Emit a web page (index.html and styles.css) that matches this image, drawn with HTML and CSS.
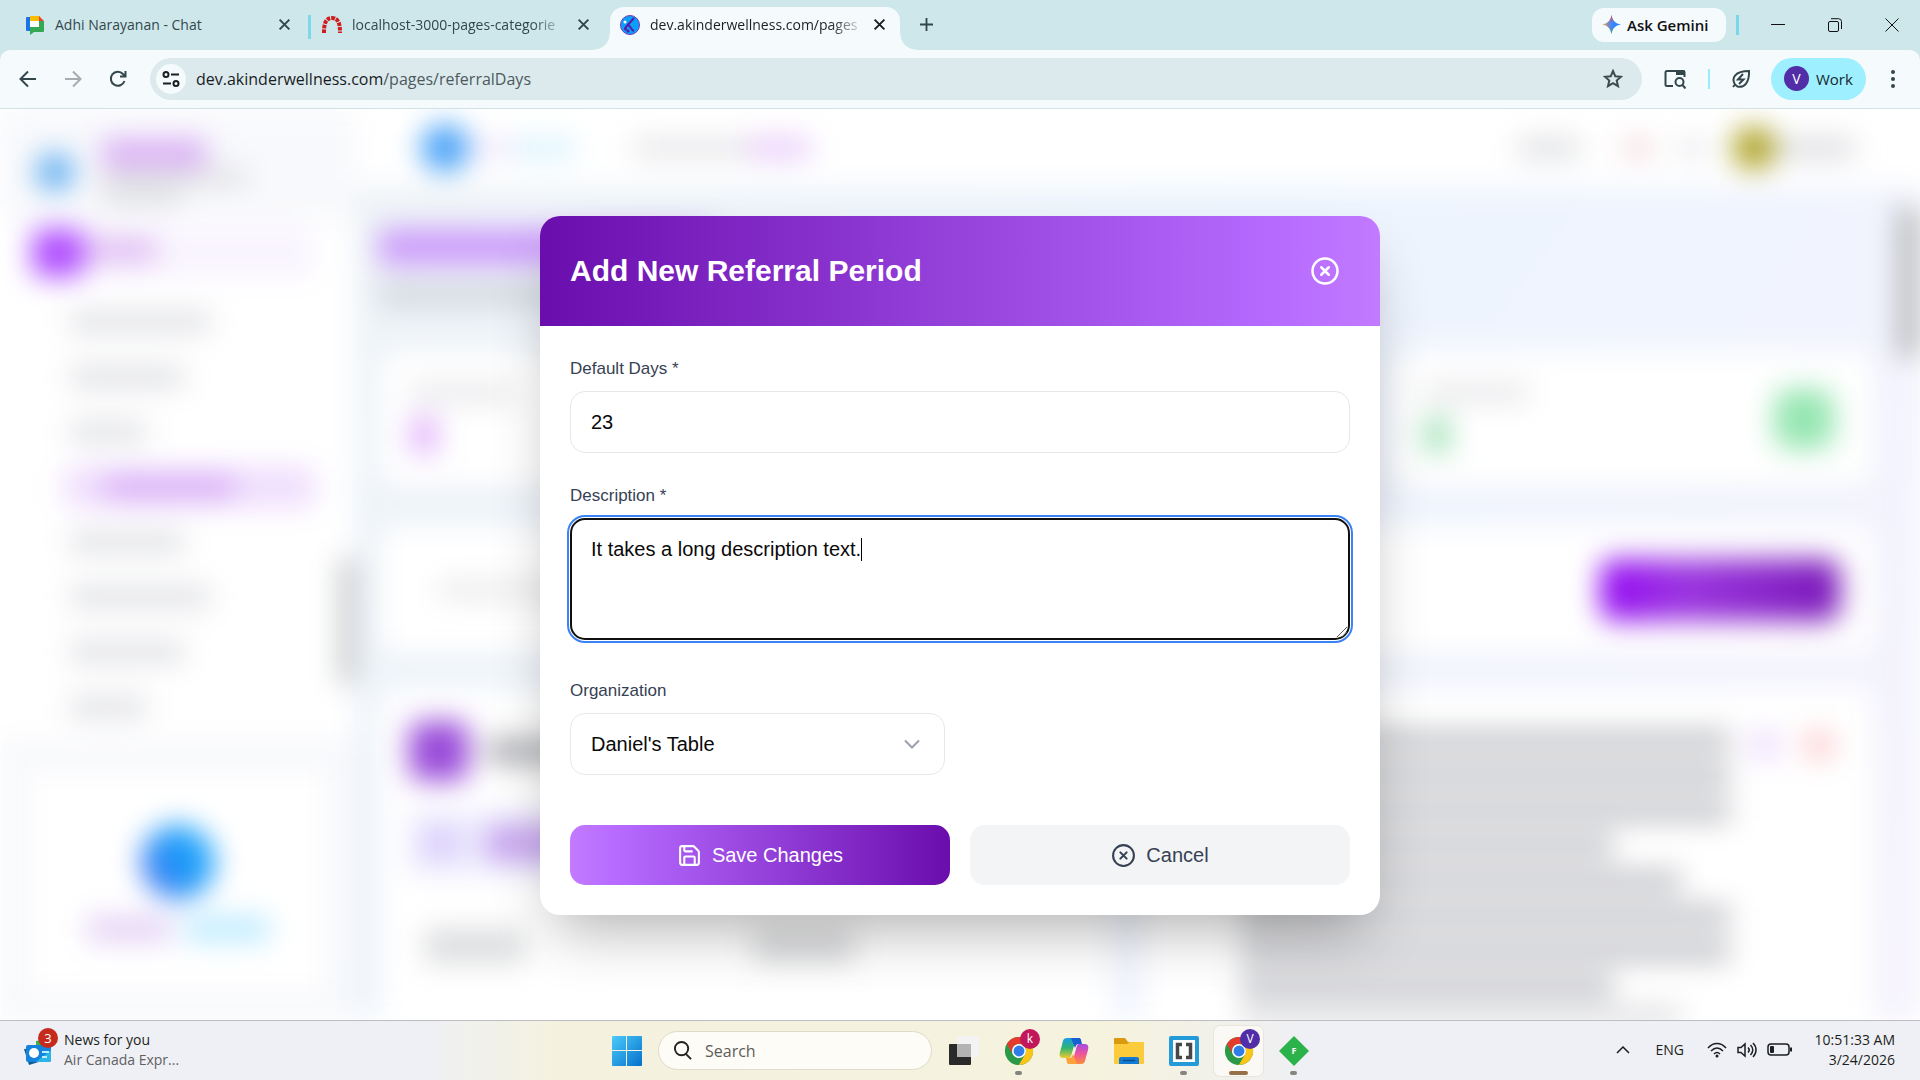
FILE: index.html
```html
<!DOCTYPE html>
<html lang="en">

<head>
  <meta charset="UTF-8">
  <title>dev.akinderwellness.com/pages/referralDays</title>
  <link rel="stylesheet" href="styles.css">
</head>

<body>
  <!-- shared symbols -->
  <svg class="defs" aria-hidden="true">
    <symbol id="x" viewBox="0 0 12 12">
      <path d="M1.5 1.5l9 9M10.500 1.500l-9 9" stroke="currentColor" stroke-width="1.8" />
    </symbol>
    <symbol id="circle-x" viewBox="0 0 24 24">
      <g fill="none" stroke="currentColor" stroke-width="2" stroke-linecap="round">
        <circle cx="12" cy="12" r="10" />
        <path d="M15 9l-6 6M9 9l6 6" />
      </g>
    </symbol>
    <symbol id="chrome" viewBox="0 0 32 32">
      <circle cx="16" cy="16" r="15" fill="#2a9a48" />
      <path d="M3 8.500A15 15 0 0 1 29 8.500H16a7.500 7.500 0 0 0-6.500 11.200z" fill="#e33b2e" />
      <path d="M29 8.500A15 15 0 0 1 15.800 31l6.700-11.300A7.500 7.500 0 0 0 16 8.500z" fill="#fcc419" />
      <circle cx="16" cy="16" r="7.500" fill="#fff" />
      <circle cx="16" cy="16" r="5.800" fill="#2f7de9" />
    </symbol>
  </svg>

  <header class="tabstrip">
    <div class="tab">
      <svg class="favicon" viewBox="0 0 20 20">
        <path d="M2 2h4v14H2a1 1 0 0 1-1-1V3a1 1 0 0 1 1-1z" fill="#1a73e8" />
        <path d="M5 1h10v5H5z" fill="#fbbc04" />
        <path d="M14 1l5 5h-5z" fill="#ea4335" />
        <path d="M14 6h5v10a1 1 0 0 1-1 1H9l-4 3v-8h9z" fill="#34a853" />
        <path d="M5 6h9v6H5z" fill="#fff" />
      </svg>
      <span class="tabTitle">Adhi Narayanan - Chat</span>
      <button class="tabClose" aria-label="Close tab"><svg><use href="#x" /></svg></button>
    </div>
    <div class="tab divided">
      <svg class="favicon" viewBox="0 0 20 20">
        <path d="M2 18C2 10 3 3 10 3s8 7 8 15" fill="none" stroke="#d01c1c" stroke-width="4" stroke-dasharray="3.600 1" />
      </svg>
      <span class="tabTitle fade">localhost-3000-pages-categorie</span>
      <button class="tabClose" aria-label="Close tab"><svg><use href="#x" /></svg></button>
    </div>
    <div class="tab active">
      <svg class="favicon" viewBox="0 0 20 20">
        <circle cx="10" cy="10" r="9.500" fill="#08a0f8" stroke="#7a35b8" />
        <path d="M14 3L6 12c-2 2-1 3 1 2M8 10c2 0 3 5 6 6" fill="none" stroke="#5b19a6" stroke-width="2" />
        <circle cx="5" cy="7" r="1.500" fill="#fff" />
        <circle cx="8" cy="16" r="1.500" fill="#5b19a6" />
      </svg>
      <span class="tabTitle fade">dev.akinderwellness.com/pages</span>
      <button class="tabClose" aria-label="Close tab"><svg><use href="#x" /></svg></button>
    </div>
    <button class="newTab" aria-label="New tab">
      <svg viewBox="0 0 14 14"><path d="M7 0v14M0 7h14" stroke="currentColor" stroke-width="2" /></svg>
    </button>
    <div class="windowTools">
      <button class="gemini">
        <svg viewBox="0 0 20 20">
          <defs>
            <linearGradient id="gem" x1="0" y1="0" x2="1" y2="0">
              <stop offset="0" stop-color="#f4b534" />
              <stop offset=".35" stop-color="#7a86c9" />
              <stop offset=".6" stop-color="#3186ff" />
              <stop offset="1" stop-color="#3186ff" />
            </linearGradient>
            <linearGradient id="gem2" x1="0" y1="0" x2="0" y2="1">
              <stop offset="0" stop-color="#f04438" />
              <stop offset=".4" stop-color="#f04438" stop-opacity="0" />
              <stop offset=".65" stop-color="#2aa55a" stop-opacity="0" />
              <stop offset="1" stop-color="#2aa55a" />
            </linearGradient>
          </defs>
          <path d="M10 0c1 6 4 9 10 10-6 1-9 4-10 10-1-6-4-9-10-10 6-1 9-4 10-10z" fill="url(#gem)" />
          <path d="M10 0c1 6 4 9 10 10-6 1-9 4-10 10-1-6-4-9-10-10 6-1 9-4 10-10z" fill="url(#gem2)" />
        </svg>
        Ask Gemini
      </button>
      <i class="stripe"></i>
      <button class="winBtn" aria-label="Minimize"><svg viewBox="0 0 14 14"><path d="M0 6.500h14" /></svg></button>
      <button class="winBtn" aria-label="Restore"><svg viewBox="0 0 14 14"><rect x=".5" y="3.500" width="10" height="10" rx="1.500" /><path d="M3 .7h7.500a3 3 0 0 1 3 3V11" /></svg></button>
      <button class="winBtn" aria-label="Close"><svg viewBox="0 0 14 14"><path d="M.5.5l13 13M13.500.5l-13 13" /></svg></button>
    </div>
  </header>

  <nav class="toolbar">
    <button class="navBtn" aria-label="Back"><svg viewBox="0 0 20 20"><path d="M18 10H3M10 2.500L2.500 10l7.500 7.500" /></svg></button>
    <button class="navBtn off" aria-label="Forward"><svg viewBox="0 0 20 20"><path d="M2 10h15M10 2.500l7.500 7.500-7.500 7.500" /></svg></button>
    <button class="navBtn" aria-label="Reload"><svg viewBox="0 0 20 20"><path d="M16.500 12A7 7 0 1 1 15 5l2 2M17.500 2v5.500H12" /></svg></button>
    <div class="addressBar">
      <button class="siteInfo" aria-label="Site information">
        <svg viewBox="0 0 18 18"><circle cx="4" cy="4.500" r="2.500" /><path d="M9 4.500h8M1 13.500h8" /><circle cx="14" cy="13.500" r="2.500" /></svg>
      </button>
      <a class="url" href="#">dev.akinderwellness.com<span>/pages/referralDays</span></a>
      <button class="star" aria-label="Bookmark">
        <svg viewBox="0 0 20 20"><path d="M10 2l2.300 5.300 5.700.5-4.300 3.800 1.300 5.600-5-3-5 3 1.300-5.600L2 7.800l5.700-.5z" /></svg>
      </button>
    </div>
    <button class="lens" aria-label="Search this page">
      <svg viewBox="0 0 22 20"><path d="M9 17H3a1.500 1.500 0 0 1-1.500-1.500v-12A1.500 1.500 0 0 1 3 2h16a1.500 1.500 0 0 1 1.500 1.500V8" /><path d="M12 1h8.500v5H12z" fill="currentColor" stroke="none" /><circle cx="15.500" cy="13" r="4" /><path d="M18.500 16l3 3.500" /></svg>
    </button>
    <i class="stripe light"></i>
    <button class="leaf" aria-label="Performance">
      <svg viewBox="0 0 20 20"><path d="M2 18l2-2.500C0 9 4 2 18 2c.5 12-5 17-11.500 15.500L4 15.500M12 5L7 10.500h5.500L8 15" /></svg>
    </button>
    <button class="profile"><b>V</b>Work</button>
    <button class="kebab" aria-label="Menu"><svg viewBox="0 0 4 18"><circle cx="2" cy="2" r="2" /><circle cx="2" cy="9" r="2" /><circle cx="2" cy="16" r="2" /></svg></button>
  </nav>

  <main class="viewport">
    <div class="app" aria-hidden="true">
      <aside class="sidebar">
        <div class="brand">
          <i class="brandLogo"></i>
          <div class="brandText"><i></i><i></i><i></i></div>
        </div>
        <div class="home"><i></i><i></i></div>
        <div class="menu">
          <i class="w3"></i>
          <i class="w2"></i>
          <i class="w1"></i>
          <i class="current"></i>
          <i class="w2"></i>
          <i class="w3"></i>
          <i class="w2"></i>
          <i class="w1"></i>
        </div>
        <div class="sideFoot">
          <div class="footCard"><i></i><p><i></i><i></i></p></div>
        </div>
        <i class="sideThumb"></i>
      </aside>
      <section class="content">
        <div class="topbar">
          <i class="topLogo"></i><i class="name1"></i><i class="name2"></i>
          <i class="welcome"></i><i class="who"></i>
          <i class="lang"></i><i class="bell"></i><i class="cog"></i><i class="avatar"></i><i class="user"></i>
        </div>
        <div class="board">
          <i class="pageTitle"></i>
          <i class="subTitle"></i>
          <div class="stats">
            <div class="card stat"><p><i></i><i></i></p></div>
            <div class="card stat"></div>
            <div class="card stat green"><p><i></i><i></i></p><i class="badge"></i></div>
          </div>
          <div class="card search"><i></i><i class="addBtn"></i></div>
          <div class="periods">
            <div class="card period">
              <div class="row"><i class="tile"></i><i class="tileName"></i></div>
              <div class="org"><i></i><i></i></div>
              <div class="dates"><i></i><i></i></div>
            </div>
            <div class="card period long">
              <div class="lines"><i></i><i></i><i></i><i class="short"></i><i class="mid"></i><i></i><i></i><i class="short"></i><i class="mid"></i></div>
              <i class="edit"></i><i class="del"></i>
            </div>
          </div>
        </div>
        <i class="pageThumb"></i>
      </section>
    </div>

    <div class="overlay">
      <form class="modal" role="dialog" aria-labelledby="modalTitle">
        <div class="modalHead">
          <h2 id="modalTitle">Add New Referral Period</h2>
          <button type="button" class="modalClose" aria-label="Close"><svg><use href="#circle-x" /></svg></button>
        </div>
        <div class="modalBody">
          <div class="field">
            <label for="days">Default Days *</label>
            <input id="days" type="text" value="23">
          </div>
          <div class="field area">
            <label for="desc">Description *</label>
            <div class="control">
              <textarea id="desc">It takes a long description text.</textarea>
              <i class="caret"></i>
              <svg class="grip" viewBox="0 0 10 10"><path d="M0 10L10 0M5 10l5-5" /></svg>
            </div>
          </div>
          <div class="field half">
            <label for="org">Organization</label>
            <div class="control">
              <select id="org">
                <option>Daniel's Table</option>
              </select>
              <svg class="chevron" viewBox="0 0 16 10"><path d="M1 1.500l7 7 7-7" /></svg>
            </div>
          </div>
          <div class="actions">
            <button type="button" class="save">
              <svg viewBox="0 0 24 24"><path d="M15.200 3a2 2 0 0 1 1.400.6l3.800 3.800a2 2 0 0 1 .6 1.400V19a2 2 0 0 1-2 2H5a2 2 0 0 1-2-2V5a2 2 0 0 1 2-2z" /><path d="M17 21v-7a1 1 0 0 0-1-1H8a1 1 0 0 0-1 1v7M7 3v4a1 1 0 0 0 1 1h7" /></svg>
              Save Changes
            </button>
            <button type="button" class="cancel"><svg><use href="#circle-x" /></svg>Cancel</button>
          </div>
        </div>
      </form>
    </div>
  </main>

  <footer class="taskbar">
    <button class="news">
      <span class="newsIcon">
        <svg viewBox="0 0 28 28">
          <path d="M12 3l12-2v14H12z" fill="#3fae4c" />
          <path d="M0 11l5 16 16-5-4-12z" fill="#0c5a96" />
          <rect x="2" y="7" width="25" height="17" rx="2" fill="#1583dc" />
          <path d="M12 24L27 12v10a2 2 0 0 1-2 2z" fill="#2cb5e8" />
          <circle cx="10" cy="15" r="5" fill="#fff" />
          <path d="M18 14h7M18 19h5" stroke="#bdf0ff" stroke-width="2" />
        </svg>
        <b>3</b>
      </span>
      <span class="newsText">News for you<small>Air Canada Expr...</small></span>
    </button>

    <div class="dock">
      <button class="app-icon" aria-label="Start">
        <svg viewBox="0 0 30 30">
          <defs><linearGradient id="win" x1="0" y1="0" x2="1" y2="1"><stop offset="0" stop-color="#4bcbfa" /><stop offset="1" stop-color="#0470cc" /></linearGradient></defs>
          <path d="M0 1a1 1 0 0 1 1-1h13v14H0zM15 0h14a1 1 0 0 1 1 1v13H15zM0 15h14v15H1a1 1 0 0 1-1-1zM15 15h15v14a1 1 0 0 1-1 1H15z" fill="url(#win)" />
        </svg>
      </button>
      <label class="taskSearch">
        <svg viewBox="0 0 20 20"><circle cx="9" cy="8" r="7" /><path d="M13 13l6 6" /></svg>
        <input type="text" placeholder="Search" aria-label="Search">
      </label>
      <button class="app-icon" aria-label="Task view">
        <svg viewBox="0 0 30 30"><rect y="8" width="22" height="21" rx="1" fill="#2a2a2a" /><rect x="8" width="22" height="21" rx="1" fill="#f3f3f3" /><path d="M8 8h14v13H8z" fill="#b3b3b3" /></svg>
      </button>
      <button class="app-icon running" aria-label="Chrome"><svg><use href="#chrome" /></svg><b class="pink">k</b></button>
      <button class="app-icon" aria-label="Copilot">
        <svg viewBox="0 0 30 30">
          <defs>
            <linearGradient id="cp1" x1="0" y1="0" x2="0" y2="1"><stop offset="0" stop-color="#1a9be8" /><stop offset=".5" stop-color="#2fb573" /><stop offset="1" stop-color="#f0c92e" /></linearGradient>
            <linearGradient id="cp2" x1="0" y1="0" x2="0" y2="1"><stop offset="0" stop-color="#a24be0" /><stop offset=".5" stop-color="#f0559b" /><stop offset="1" stop-color="#fb8b3c" /></linearGradient>
          </defs>
          <path d="M14 2H8C4 2 4 5 3 9L1 16c-1 4 0 6 4 6h4c3 0 3-2 4-5l3-11c1-3 2-4 5-4z" fill="url(#cp1)" />
          <path d="M16 28h6c4 0 4-3 5-7l2-7c1-4 0-6-4-6h-4c-3 0-3 2-4 5l-3 11c-1 3-2 4-5 4z" fill="url(#cp2)" />
          <path d="M12 2h8c2 0 2 2 3 6h-3c-3 0-3 2-4 4z" fill="#1660d0" />
          <path d="M18 28h-8c-2 0-2-2-3-6h3c3 0 3-2 4-4z" fill="#fba23c" />
        </svg>
      </button>
      <button class="app-icon" aria-label="File Explorer">
        <svg viewBox="0 0 30 30"><path d="M0 3a1 1 0 0 1 1-1h10l3 4h15v8H0z" fill="#d99a10" /><path d="M0 8h13l3-2h13a1 1 0 0 1 1 1v20a1 1 0 0 1-1 1H1a1 1 0 0 1-1-1z" fill="#fccb3c" /><path d="M5 28v-5a2 2 0 0 1 2-2h16a2 2 0 0 1 2 2v5z" fill="#137bd1" /><path d="M9 24.500h12" stroke="#0a4f91" stroke-width="1.500" /></svg>
      </button>
      <button class="app-icon running" aria-label="Brackets">
        <svg viewBox="0 0 30 30"><rect width="30" height="30" rx="2" fill="#239bd8" /><path d="M4 4h22v22H4z" fill="#fff" /><path d="M13 8.500H8.500v13H13M17 8.500h4.500v13H17" fill="none" stroke="#474747" stroke-width="3.500" /></svg>
      </button>
      <button class="app-icon running focused" aria-label="Chrome, work profile"><svg><use href="#chrome" /></svg><b class="violet">V</b></button>
      <button class="app-icon running" aria-label="F">
        <svg viewBox="0 0 30 30"><path d="M15 0l15 15-15 15L0 15z" fill="#2bb24a" /><text x="15" y="18" text-anchor="middle">F</text></svg>
      </button>
    </div>

    <div class="tray">
      <svg class="trayUp" viewBox="0 0 14 8"><path d="M1 7l6-6 6 6" /></svg>
      <span class="ime">ENG</span>
      <svg class="wifi" viewBox="0 0 20 16"><path d="M1 6c5-6 13-6 18 0M4 9c4-4 8-4 12 0M7 12c2-2 4-2 6 0" /><circle cx="10" cy="14" r="1.500" fill="currentColor" stroke="none" /></svg>
      <svg class="volume" viewBox="0 0 20 16"><path d="M1 5.500h3L8 2v12l-4-3.500H1zM11 5.500c1.500 1.500 1.500 3.500 0 5M13.500 3c3 3 3 7 0 10M16 1c4 4 4 10 0 14" /></svg>
      <svg class="battery" viewBox="0 0 25 14"><rect x="1" y="1" width="21" height="11" rx="3" /><rect x="3" y="3" width="4" height="7" rx="1" fill="currentColor" stroke="none" /><path d="M24 4.500v4" stroke-width="2" /></svg>
      <time class="clock">10:51:33 AM<br>3/24/2026</time>
    </div>
  </footer>
</body>

</html>
```
FILE: styles.css
```css
* {
  box-sizing: border-box;
}

body {
  display: flex;
  flex-direction: column;
  height: 100vh;
  margin: 0;
  overflow: hidden;
  background: #cee7eb;
  font-family: "Open Sans", "Noto Sans", sans-serif;
  color: #1c1f20;
}

h2,
p {
  margin: 0;
}

button {
  padding: 0;
  border: 0;
  background: none;
  color: inherit;
  font: inherit;
}

button,
svg {
  flex: none;
}

svg,
i {
  display: block;
}

.defs {
  position: absolute;
  width: 0;
  height: 0;
}

/* tab strip */
.tabstrip {
  display: flex;
  height: 50px;
  flex: none;
  padding: 7px 0 0 12px;
  background: #cee7eb;
  font-size: 14px;
  color: #33474b;
}

.tab {
  position: relative;
  display: flex;
  align-items: center;
  width: 299px;
  height: 43px;
  padding: 0 20px 8px 13px;
}

.tab.divided {
  padding-left: 11px;
}

.tab.divided::before {
  content: "";
  position: absolute;
  left: -3px;
  top: 8px;
  width: 3px;
  height: 24px;
  background: #7fd8ea;
}

.tab.active {
  width: 290px;
  padding: 0 14px 8px 10px;
  border-radius: 14px 14px 0 0;
  background: #f5fafd;
  color: #1c1f20;
}

.tab.active::before,
.tab.active::after {
  content: "";
  position: absolute;
  bottom: 0;
  left: -16px;
  width: 16px;
  height: 16px;
  background: radial-gradient(circle at 0 0, #cee7eb 15px, #f5fafd 16px);
}

.tab.active::after {
  left: 100%;
  background: radial-gradient(circle at 100% 0, #cee7eb 15px, #f5fafd 16px);
}

.favicon {
  width: 20px;
  height: 20px;
}

.tabTitle {
  flex: 1;
  margin-left: 10px;
  white-space: nowrap;
}

.tabTitle.fade {
  mask-image: linear-gradient(90deg, #000 180px, transparent 216px);
}

.tabClose svg {
  width: 13px;
  height: 13px;
}

.newTab {
  width: 52px;
  padding-bottom: 8px;
}

.newTab svg {
  width: 13px;
  height: 13px;
  margin: auto;
}

.windowTools {
  display: flex;
  align-items: center;
  margin-left: auto;
  padding-bottom: 8px;
  color: #111;
}

.gemini {
  display: flex;
  align-items: center;
  gap: 6px;
  width: 134px;
  height: 34px;
  padding-left: 10px;
  border-radius: 12px;
  background: #f5fafd;
  font-size: 15px;
  font-weight: 600;
  white-space: nowrap;
}

.gemini svg {
  width: 19px;
  height: 19px;
}

.stripe {
  width: 3px;
  height: 20px;
  margin: 0 10px;
  background: #79d7e9;
}

.stripe.light {
  width: 2px;
  background: #9becfb;
}

.winBtn {
  width: 57px;
}

.winBtn svg {
  width: 14px;
  height: 14px;
  margin: auto;
  fill: none;
  stroke: currentColor;
}

/* toolbar */
.toolbar {
  display: flex;
  align-items: center;
  height: 59px;
  flex: none;
  padding: 0 12px 1px 5px;
  border-bottom: 1px solid #d3e1e5;
  border-radius: 10px 10px 0 0;
  background: #f5fafd;
  color: #33474b;
}

.toolbar svg {
  width: 20px;
  height: 20px;
  margin: auto;
  fill: none;
  stroke: currentColor;
  stroke-width: 2;
}

.navBtn {
  width: 45px;
}

.navBtn.off {
  color: #a3adaf;
}

.addressBar {
  display: flex;
  align-items: center;
  flex: 1;
  height: 42px;
  margin-left: 10px;
  padding: 0 19px 0 6px;
  border-radius: 21px;
  background: #dceaee;
}

.siteInfo {
  width: 30px;
  height: 30px;
  border-radius: 50%;
  background: #f5fafd;
  color: #1c1f20;
}

.toolbar .siteInfo svg {
  width: 18px;
  height: 18px;
}

.url {
  flex: 1;
  margin-left: 10px;
  color: #1a1d1e;
  font-size: 16px;
  text-decoration: none;
}

.url span {
  color: #4c5a5d;
}

.star {
  color: #3f4a4c;
}

.lens {
  width: 66px;
}

.toolbar .lens svg {
  width: 22px;
}

.toolbar .stripe {
  margin: 0;
}

.leaf {
  width: 61px;
}

.profile {
  display: flex;
  align-items: center;
  gap: 7px;
  width: 95px;
  height: 42px;
  padding-left: 13px;
  border-radius: 21px;
  background: #9eefff;
  color: #14282c;
  font-size: 15px;
}

.profile b {
  width: 25px;
  height: 25px;
  border-radius: 50%;
  background: #512da8;
  color: #fff;
  font-size: 14px;
  font-weight: 400;
  line-height: 25px;
}

.kebab {
  width: 42px;
  padding-left: 12px;
}

.toolbar .kebab svg {
  width: 4px;
  height: 18px;
  fill: currentColor;
  stroke: none;
}

/* page behind the dialog */
.viewport {
  position: relative;
  flex: 1;
  min-height: 0;
  overflow: hidden;
  background: #fff;
}

.app {
  display: flex;
  height: 100%;
  filter: blur(14px);
}

.sidebar {
  position: relative;
  display: flex;
  flex-direction: column;
  width: 355px;
  flex: none;
  background: #fff;
}

.brand {
  display: flex;
  align-items: center;
  gap: 28px;
  height: 111px;
  padding: 14px 36px 0;
  background: #f8f9fc;
}

.brandLogo {
  width: 38px;
  height: 38px;
  border-radius: 50%;
  background: #62aef0;
}

.brandText {
  display: grid;
  gap: 3px;
}

.brandText i {
  width: 145px;
  height: 16px;
  background: #dcdde1;
}

.brandText i:first-child {
  width: 104px;
  height: 26px;
  background: #d8aaf5;
}

.brandText i:last-child {
  width: 80px;
}

.home {
  display: flex;
  align-items: center;
  height: 50px;
  margin: 8px 40px 0 32px;
  border-radius: 12px;
  background: #f9f4fe;
}

.home i {
  width: 52px;
  height: 48px;
  border-radius: 12px;
  background: #b04cff;
}

.home i + i {
  width: 74px;
  height: 22px;
  margin-bottom: 6px;
  background: #dcb6f2;
}

.menu {
  display: grid;
  gap: 15px;
  padding: 24px 40px 0 70px;
}

.menu i {
  height: 40px;
  border: solid #fff;
  border-width: 9px 0;
  background: #e1e2e6;
}

.menu .w1 {
  width: 76px;
}

.menu .w2 {
  width: 114px;
}

.menu .w3 {
  width: 140px;
}

.menu .current {
  margin-left: -6px;
  border: 0;
  border-radius: 10px;
  background: linear-gradient(#d7aaf6, #d7aaf6) 40px center / 130px 22px no-repeat #efddfd;
}

.sideFoot {
  flex: 1;
  margin-top: 14px;
  padding: 28px;
  background: #f7f8fb;
}

.footCard {
  display: flex;
  flex-direction: column;
  align-items: center;
  height: 100%;
  padding-top: 56px;
  background: #fff;
}

.footCard > i {
  width: 74px;
  height: 74px;
  border-radius: 50%;
  background: linear-gradient(60deg, #5a69ef, #1b98f8 50%, #28b0ff);
}

.footCard p {
  display: flex;
  gap: 14px;
  margin-top: 18px;
}

.footCard p i {
  width: 84px;
  height: 24px;
  background: #e2cff4;
}

.footCard p i + i {
  background: #b9eaff;
}

.sideThumb,
.pageThumb {
  position: absolute;
  left: 340px;
  top: 450px;
  width: 22px;
  height: 125px;
  background: #c0c1c3;
}

.content {
  position: relative;
  display: flex;
  flex-direction: column;
  flex: 1;
  overflow: hidden;
  background: linear-gradient(125deg, #eef3f6, #ecf4fe 45%, #f6f3fd);
}

.pageThumb {
  left: auto;
  right: 0;
  top: 98px;
  width: 22px;
  height: 150px;
  background: #b4b5b8;
}

.topbar {
  display: flex;
  align-items: center;
  height: 78px;
  flex: none;
  padding: 0 66px;
  background: #fff;
}

.topbar i {
  height: 20px;
  flex: none;
}

.topbar .topLogo,
.topbar .avatar {
  width: 48px;
  height: 48px;
  border-radius: 50%;
  background: #4aa3f7;
}

.name1 {
  width: 44px;
  background: #f2eafb;
}

.name2 {
  width: 62px;
  background: #daf3fe;
}

.welcome {
  width: 115px;
  margin-left: 58px;
  background: #e7e7ea;
}

.who {
  width: 62px;
  background: #e8c9fa;
}

.lang {
  width: 62px;
  margin-left: auto;
  background: #dfe0e3;
}

.bell {
  width: 28px;
  margin-left: 44px;
  background: #f1d8dc;
}

.cog {
  width: 26px;
  margin-left: 28px;
  background: #e8e8ed;
}

.topbar .avatar {
  width: 44px;
  height: 44px;
  margin-left: 26px;
  background: #afa429;
}

.user {
  width: 78px;
  background: #dcdce0;
}

.board {
  display: flex;
  flex-direction: column;
  flex: 1;
  min-height: 0;
  padding: 42px 46px 0 24px;
}

/* fixed rows, the last one runs off below the fold */
.board > * {
  flex: none;
}

.pageTitle {
  width: 330px;
  height: 36px;
  background: #cc9cfb;
}

.subTitle {
  width: 420px;
  height: 20px;
  margin-top: 20px;
  background: #cfd4dc;
}

.card {
  border-radius: 16px;
  background: #fff;
  box-shadow: 0 4px 8px #e9ebf2;
}

.stats {
  display: grid;
  grid-template-columns: repeat(3, 1fr);
  gap: 24px;
  margin-top: 46px;
}

.stat {
  display: flex;
  align-items: center;
  justify-content: space-between;
  height: 136px;
  padding: 0 40px 0 32px;
}

.stat p i {
  width: 104px;
  height: 16px;
  background: #e4e4e7;
}

.stat p i + i {
  width: 26px;
  height: 36px;
  margin-top: 16px;
  background: #e0b0fb;
}

.stat.green p i + i {
  background: #a5e2b9;
}

.badge {
  width: 60px;
  height: 60px;
  border-radius: 16px;
  background: #95e6b1;
}

.search {
  display: flex;
  align-items: center;
  justify-content: space-between;
  height: 130px;
  margin-top: 38px;
  padding: 0 34px 0 60px;
}

.search i {
  width: 200px;
  height: 14px;
  background: #e4e4e6;
}

.search .addBtn {
  width: 240px;
  height: 62px;
  border-radius: 14px;
  background: linear-gradient(90deg, #960af5, #9b35e0 35%, #7a18b8);
}

.periods {
  display: grid;
  grid-template-columns: 1fr 1fr;
  gap: 28px;
  margin-top: 32px;
}

.period {
  padding: 34px 30px;
}

.row {
  display: flex;
  align-items: center;
  gap: 18px;
}

.tile {
  width: 60px;
  height: 60px;
  border-radius: 14px;
  background: #9a4cd9;
}

.tileName {
  width: 240px;
  height: 26px;
  background: #b0b1b6;
}

.org {
  display: flex;
  align-items: center;
  gap: 24px;
  height: 64px;
  margin-top: 30px;
  padding-left: 12px;
  background: #eff0fe;
}

.org i {
  width: 40px;
  height: 36px;
  background: #dccffb;
}

.org i + i {
  width: 120px;
  background: #c9a6f0;
}

.dates {
  display: grid;
  grid-template-columns: 1fr 1fr;
  margin-top: 54px;
  padding-left: 16px;
}

.dates i {
  width: 100px;
  height: 34px;
  background: #dcdddf;
}

.period.long {
  display: flex;
  gap: 24px;
  padding: 43px 40px 0 100px;
}

.lines {
  flex: 1;
}

.lines i {
  height: 22px;
  margin-bottom: 13px;
  background: #c4c5ca;
}

.lines .short {
  width: 76%;
}

.lines .mid {
  width: 90%;
}

.edit,
.del {
  width: 30px;
  height: 30px;
  margin-left: -4px;
  border-radius: 10px;
  background: #eddcfd;
}

.del {
  margin-left: 0;
  background: #fccfd2;
}

/* dialog */
.overlay {
  position: absolute;
  inset: 0;
  display: flex;
  align-items: center;
  justify-content: center;
  padding-top: 2px;
  font-family: "Liberation Sans", Arial, sans-serif;
}

.modal {
  width: 840px;
  overflow: hidden;
  border-radius: 20px;
  background: #fff;
  box-shadow: 0 30px 60px -15px rgba(0, 0, 0, .3);
}

.modalHead {
  display: flex;
  align-items: center;
  justify-content: space-between;
  height: 110px;
  padding: 0 40px 0 30px;
  background: linear-gradient(90deg, #6a0dad, #b76bff 88%, #c27aff);
  color: #fff;
}

.modalHead h2 {
  font-size: 30px;
  line-height: 40px;
}

.modalClose svg {
  width: 30px;
  height: 30px;
}

.modalBody {
  padding: 30px;
}

.field {
  margin-bottom: 30px;
}

.field.area {
  margin-bottom: 38px;
}

.field.half {
  width: 375px;
  margin-bottom: 50px;
}

.field label {
  display: block;
  margin-bottom: 10px;
  color: #364153;
  font-size: 17px;
  line-height: 25px;
}

.field input,
.field textarea,
.field select {
  display: block;
  width: 100%;
  height: 62px;
  margin: 0;
  padding: 0 20px;
  border: 1px solid #e5e7eb;
  border-radius: 15px;
  background: #fff;
  color: #0a0a0a;
  font: 20px/30px "Liberation Sans", Arial, sans-serif;
  appearance: none;
}

.field textarea {
  height: 122px;
  padding: 14px 19px;
  border: 2px solid #101010;
  outline: 2px solid #3b82f6;
  outline-offset: 1px;
  resize: none;
}

.control {
  position: relative;
}

.caret {
  position: absolute;
  left: 291px;
  top: 20px;
  width: 1px;
  height: 23px;
  background: #000;
}

.grip {
  position: absolute;
  right: 3px;
  bottom: 3px;
  width: 10px;
  height: 10px;
  stroke: #555;
}

.chevron {
  position: absolute;
  right: 25px;
  top: 26px;
  width: 16px;
  height: 10px;
  fill: none;
  stroke: #99a1af;
  stroke-width: 2;
}

.actions {
  display: grid;
  grid-template-columns: 1fr 1fr;
  gap: 20px;
}

.actions button {
  display: flex;
  align-items: center;
  justify-content: center;
  gap: 10px;
  height: 60px;
  border-radius: 15px;
  background: #f3f4f6;
  color: #364153;
  font-size: 20px;
}

.actions .save {
  background: linear-gradient(90deg, #c27aff, #b76bff 12%, #6a0dad);
  color: #fff;
}

.actions svg {
  width: 25px;
  height: 25px;
}

.save svg {
  fill: none;
  stroke: currentColor;
  stroke-width: 2;
  stroke-linejoin: round;
}

/* taskbar */
.taskbar {
  display: grid;
  grid-template-columns: 1fr auto 1fr;
  align-items: center;
  height: 60px;
  flex: none;
  border-top: 1px solid #bcbec2;
  background: linear-gradient(90deg, #eff0f5 22%, #f4f2df 29%, #f5f2de 58%, #eff0f5 68%);
  font-size: 14px;
}

.news {
  display: flex;
  justify-self: start;
  gap: 12px;
  padding: 0 0 2px 24px;
  text-align: left;
}

.newsIcon {
  position: relative;
  width: 28px;
  padding-top: 8px;
}

.newsIcon svg {
  width: 28px;
  height: 28px;
}

.newsIcon b {
  position: absolute;
  left: 14px;
  top: -2px;
  width: 20px;
  height: 20px;
  border-radius: 50%;
  background: #c42b1c;
  color: #fff;
  font-size: 13px;
  font-weight: 400;
  line-height: 20px;
  text-align: center;
}

.newsText {
  line-height: 20px;
}

.newsText small {
  display: block;
  color: #5f6063;
  font-size: 14px;
}

.dock {
  display: flex;
  align-items: center;
}

.app-icon {
  position: relative;
  width: 55px;
  height: 50px;
}

.app-icon svg {
  width: 30px;
  height: 30px;
  margin: auto;
}

.app-icon text {
  fill: #fff;
  font-size: 9px;
  font-weight: 700;
}

.app-icon b {
  position: absolute;
  right: 6px;
  top: 3px;
  width: 20px;
  height: 20px;
  border-radius: 50%;
  color: #fff;
  font-size: 12px;
  font-weight: 400;
  line-height: 20px;
}

.app-icon .pink {
  background: #c2185b;
}

.app-icon .violet {
  background: #512da8;
}

.app-icon.running::after {
  content: "";
  position: absolute;
  left: 24px;
  bottom: 1px;
  width: 7px;
  height: 4px;
  border-radius: 2px;
  background: #85857f;
}

.app-icon.focused {
  width: 49px;
  margin: 0 3px;
  border-radius: 6px;
  background: #faf9f5;
  box-shadow: 0 0 0 1px #e8e6dc;
}

.app-icon.focused b {
  right: 3px;
}

.app-icon.focused::after {
  left: 15px;
  width: 19px;
  background: #97704a;
}

.taskSearch {
  display: flex;
  align-items: center;
  gap: 13px;
  width: 274px;
  height: 39px;
  margin: 0 4px;
  padding-left: 14px;
  border: 1px solid #dddcc9;
  border-radius: 20px;
  background: #fdfcf7;
}

.taskSearch svg {
  width: 19px;
  height: 19px;
  fill: none;
  stroke: #222;
  stroke-width: 2;
}

.taskSearch input {
  width: 200px;
  padding: 0;
  border: 0;
  background: none;
  font: 16px "Open Sans", sans-serif;
}

.taskSearch input::placeholder {
  color: #5d5d59;
}

.tray {
  display: flex;
  align-items: center;
  justify-self: end;
  padding: 0 25px 2px 0;
}

.tray svg {
  fill: none;
  stroke: currentColor;
  stroke-width: 1.5;
}

.trayUp {
  width: 14px;
  height: 8px;
  margin-right: 26px;
}

.wifi {
  width: 20px;
  height: 16px;
  margin: 0 10px 0 23px;
}

.volume {
  width: 20px;
  height: 16px;
  margin-right: 10px;
}

.battery {
  width: 25px;
  height: 14px;
}

.clock {
  min-width: 103px;
  line-height: 20px;
  text-align: right;
}
```
